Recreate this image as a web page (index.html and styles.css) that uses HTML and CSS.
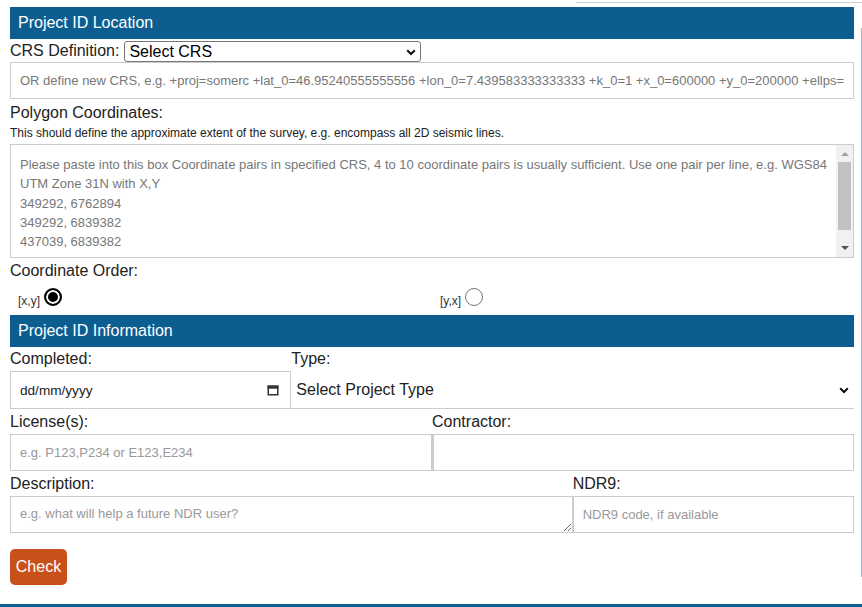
FILE: index.html
```html
<!DOCTYPE html>
<html lang="en">
<head>
<meta charset="utf-8">
<title>Project ID</title>
<link rel="stylesheet" href="styles.css">
</head>
<body>
<div class="frame-top"></div>
<div class="frame-right"></div>
<form class="form">
  <div class="section-head">Project ID Location</div>
  <div class="crs-row">
    <label class="lbl-inline" for="crs">CRS Definition:</label>
    <div class="select-wrap crs-wrap">
      <select id="crs" class="sel sel-crs"><option>Select CRS</option></select>
      <svg class="chev" width="10" height="7" viewBox="0 0 10 7"><path d="M1.2 1.2 L5 5 L8.8 1.2" fill="none" stroke="#111" stroke-width="2"/></svg>
    </div>
  </div>
  <input class="field field-crs" type="text" placeholder="OR define new CRS, e.g. +proj=somerc +lat_0=46.95240555555556 +lon_0=7.439583333333333 +k_0=1 +x_0=600000 +y_0=200000 +ellps=bessel +towgs84=674.374,15.056,405.346,0,0,0,0 +units=m +no_defs">
  <label class="lbl lbl-poly" for="coords">Polygon Coordinates:</label>
  <p class="help">This should define the approximate extent of the survey, e.g. encompass all 2D seismic lines.</p>
  <div class="coords-wrap">
    <div id="coords" class="coords" role="textbox" aria-multiline="true">Please paste into this box Coordinate pairs in specified CRS, 4 to 10 coordinate pairs is usually sufficient. Use one pair per line, e.g. WGS84 UTM Zone 31N with X,Y
349292, 6762894
349292, 6839382
437039, 6839382
437039, 6762894
349292, 6762894</div>
    <div class="vscroll" aria-hidden="true">
      <span class="arrow arrow-up"></span>
      <span class="thumb"></span>
      <span class="arrow arrow-down"></span>
    </div>
  </div>
  <label class="lbl lbl-order">Coordinate Order:</label>
  <div class="radio-row">
    <label class="radio-col">[x,y]<input type="radio" name="order" class="radio" checked></label>
    <label class="radio-col">[y,x]<input type="radio" name="order" class="radio"></label>
  </div>
  <div class="section-head">Project ID Information</div>
  <div class="grid g-1-2">
    <div class="cell">
      <label class="lbl2">Completed:</label>
      <div class="datebox">
        <input class="date-input" type="text" placeholder="dd/mm/yyyy">
        <svg class="cal" width="12" height="11" viewBox="0 0 12 11"><rect x="1.25" y="1.25" width="9.5" height="8.5" fill="none" stroke="#333" stroke-width="1.5"/><rect x="0.5" y="0.5" width="11" height="3.2" fill="#333"/></svg>
      </div>
    </div>
    <div class="cell">
      <label class="lbl2">Type:</label>
      <div class="select-wrap">
        <select class="sel sel-type"><option>Select Project Type</option></select>
        <svg class="chev chev-type" width="10" height="7" viewBox="0 0 10 7"><path d="M1.2 1.2 L5 5 L8.8 1.2" fill="none" stroke="#111" stroke-width="2"/></svg>
      </div>
    </div>
  </div>
  <div class="grid g-1-1">
    <div class="cell">
      <label class="lbl2">License(s):</label>
      <input class="field field-std" type="text" placeholder="e.g. P123,P234 or E123,E234">
    </div>
    <div class="cell">
      <label class="lbl2">Contractor:</label>
      <input class="field field-std field-contractor" type="text">
    </div>
  </div>
  <div class="grid g-2-1">
    <div class="cell">
      <label class="lbl2">Description:</label>
      <textarea class="field desc" placeholder="e.g. what will help a future NDR user?"></textarea>
    </div>
    <div class="cell">
      <label class="lbl2">NDR9:</label>
      <input class="field field-std" type="text" placeholder="NDR9 code, if available">
    </div>
  </div>
  <button class="btn-check" type="button">Check</button>
</form>
<div class="footer-bar"></div>
</body>
</html>
```
FILE: styles.css
```css
html, body {
  margin: 0;
  padding: 0;
  background: #fff;
  overflow: hidden;
}
body {
  font-family: "Liberation Sans", Arial, sans-serif;
  color: #222;
  position: relative;
  height: 607px;
}
.frame-top {
  position: absolute;
  left: 576px;
  top: 2px;
  width: 286px;
  height: 1px;
  background: #cccccc;
}
.frame-right {
  position: absolute;
  left: 861px;
  top: 28px;
  width: 1px;
  height: 549px;
  background: #a5b4c4;
}
.form {
  width: 844px;
  padding: 7px 0 0 10px;
  margin: 0;
}
.section-head {
  height: 32px;
  line-height: 32px;
  background: #0c5e91;
  color: #fff;
  font-size: 16px;
  padding-left: 8px;
}
.crs-row {
  height: 23px;
  display: flex;
  align-items: center;
  gap: 5px;
  font-size: 16px;
}
.lbl-inline {
  line-height: 23px;
}
.select-wrap {
  position: relative;
}
.crs-wrap {
  width: 297px;
  height: 21px;
  margin-top: 2px;
}
.sel {
  -webkit-appearance: none;
  appearance: none;
  font-family: "Liberation Sans", Arial, sans-serif;
  font-size: 16px;
  color: #000;
  background: #fff;
  margin: 0;
  display: block;
  width: 100%;
  box-sizing: border-box;
}
.sel-crs {
  height: 21px;
  border: 1px solid #767676;
  border-radius: 3px;
  padding: 0 0 0 4px;
  line-height: 19px;
}
.chev {
  position: absolute;
  right: 5px;
  top: 50%;
  margin-top: -3px;
  pointer-events: none;
}
.chev-type {
  right: 5px;
}
.field {
  display: block;
  width: 100%;
  box-sizing: border-box;
  border: 1px solid #ccc;
  border-radius: 0;
  margin: 0;
  padding: 0 9px;
  font-family: "Liberation Sans", Arial, sans-serif;
  font-size: 13px;
  color: #333;
  background: #fff;
  outline: none;
}
.field::placeholder {
  color: #999;
  opacity: 1;
}
.field-crs {
  height: 37px;
}
.field-crs::placeholder {
  color: #777;
}
.lbl {
  display: block;
  font-size: 16px;
  line-height: 23px;
}
.lbl-poly {
  margin-top: 2px;
}
.help {
  margin: 0 0 2px;
  font-size: 12px;
  line-height: 18px;
  color: #222;
}
.coords-wrap {
  position: relative;
}
.coords {
  width: 100%;
  height: 114px;
  box-sizing: border-box;
  border: 1px solid #ccc;
  padding: 10px 24px 0 9px;
  font-size: 13px;
  line-height: 19.35px;
  color: #777;
  white-space: pre-wrap;
  overflow: hidden;
  background: #fff;
}
.vscroll {
  position: absolute;
  top: 1px;
  right: 1px;
  bottom: 1px;
  width: 17px;
  background: #f1f1f1;
}
.thumb {
  position: absolute;
  left: 2px;
  right: 2px;
  top: 17px;
  height: 68px;
  background: #c1c1c1;
}
.arrow {
  position: absolute;
  left: 50%;
  margin-left: -4px;
  width: 0;
  height: 0;
  border-left: 4px solid transparent;
  border-right: 4px solid transparent;
}
.arrow-up {
  top: 7px;
  border-bottom: 4px solid #a3a3a3;
}
.arrow-down {
  bottom: 7px;
  border-top: 4px solid #505050;
}
.lbl-order {
  margin-top: 1px;
}
.radio-row {
  display: grid;
  grid-template-columns: 1fr 1fr;
  height: 33px;
}
.radio-col {
  padding: 6px 8px 0;
  font-size: 12px;
  line-height: 18px;
  color: #333;
}
.radio {
  -webkit-appearance: none;
  appearance: none;
  width: 18px;
  height: 18px;
  box-sizing: border-box;
  margin: 0 0 -1px 4px;
  border: 1px solid #767676;
  border-radius: 50%;
  background: #fff;
  vertical-align: baseline;
}
.radio:checked {
  border: 2px solid #000;
  background: #000;
  box-shadow: inset 0 0 0 2px #fff;
}
.grid {
  display: grid;
}
.g-1-2 {
  grid-template-columns: 1fr 2fr;
}
.g-1-1 {
  grid-template-columns: 1fr 1fr;
}
.g-2-1 {
  grid-template-columns: 2fr 1fr;
}
.cell {
  min-width: 0;
}
.lbl2 {
  display: block;
  font-size: 16px;
  line-height: 25px;
  color: #222;
}
.g-1-2 .lbl2 {
  line-height: 24px;
}
.datebox {
  height: 38px;
  box-sizing: border-box;
  border: 1px solid #ccc;
  display: flex;
  align-items: center;
  padding: 0 11px 0 9px;
}
.date-input {
  flex: 1;
  min-width: 0;
  border: 0;
  padding: 0;
  margin: 0;
  outline: none;
  font-family: "Liberation Sans", Arial, sans-serif;
  font-size: 13.6px;
  color: #222;
  background: transparent;
}
.date-input::placeholder {
  color: #222;
  opacity: 1;
}
.cal {
  display: block;
  flex: none;
}
.sel-type {
  height: 38px;
  border: 0;
  border-bottom: 1px solid #ccc;
  border-radius: 0;
  padding: 0 0 0 5px;
  color: #222;
}
.field-std {
  height: 37px;
}
.field-contractor {
  border-left-width: 2px;
}
.desc {
  height: 37px;
  padding: 9px 9px;
  line-height: 15px;
  resize: both;
  overflow: auto;
}
.btn-check {
  display: block;
  margin: 16px 0 0;
  width: 57px;
  height: 36px;
  padding: 0;
  border: 0;
  border-radius: 5px;
  background: #c8501a;
  color: #fff;
  font-family: "Liberation Sans", Arial, sans-serif;
  font-size: 16px;
}
.footer-bar {
  margin-top: 19px;
  height: 6px;
  background: #0c5e91;
}
```
